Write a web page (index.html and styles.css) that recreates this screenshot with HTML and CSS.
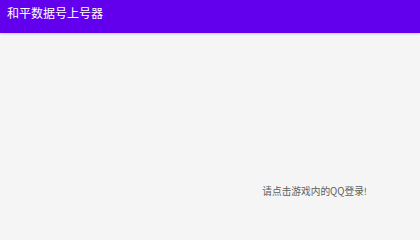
FILE: index.html
```html
<!DOCTYPE html>
<html lang="zh">
<head>
<meta charset="utf-8">
<link rel="stylesheet" href="styles.css">
</head>
<body>
<header class="appbar"><span class="title">和平数据号上号器</span></header>
<main class="content">
<p class="hint">请点击游戏内的QQ登录!</p>
</main>
</body>
</html>
```
FILE: styles.css
```css
html, body {
  margin: 0;
  padding: 0;
  width: 420px;
  height: 226px;
  overflow: hidden;
  background: #f5f5f5;
  font-family: "Noto Sans CJK SC", "Noto Sans", sans-serif;
}
.appbar {
  height: 33px;
  background: #6200ee;
  display: flex;
  align-items: center;
  padding: 0 0 0 7px;
  box-shadow: 0 1px 2px rgba(0,0,0,0.2);
  position: relative;
}
.title {
  color: #fff;
  font-size: 12px;
  line-height: 1;
  margin-top: -7px;
}
.content {
  display: flex;
  justify-content: flex-end;
  padding: 0 53px 0 0;
}
.hint {
  margin: 151px 0 0 0;
  font-size: 9.7px;
  line-height: 14px;
  color: #5e5e5e;
}
```
